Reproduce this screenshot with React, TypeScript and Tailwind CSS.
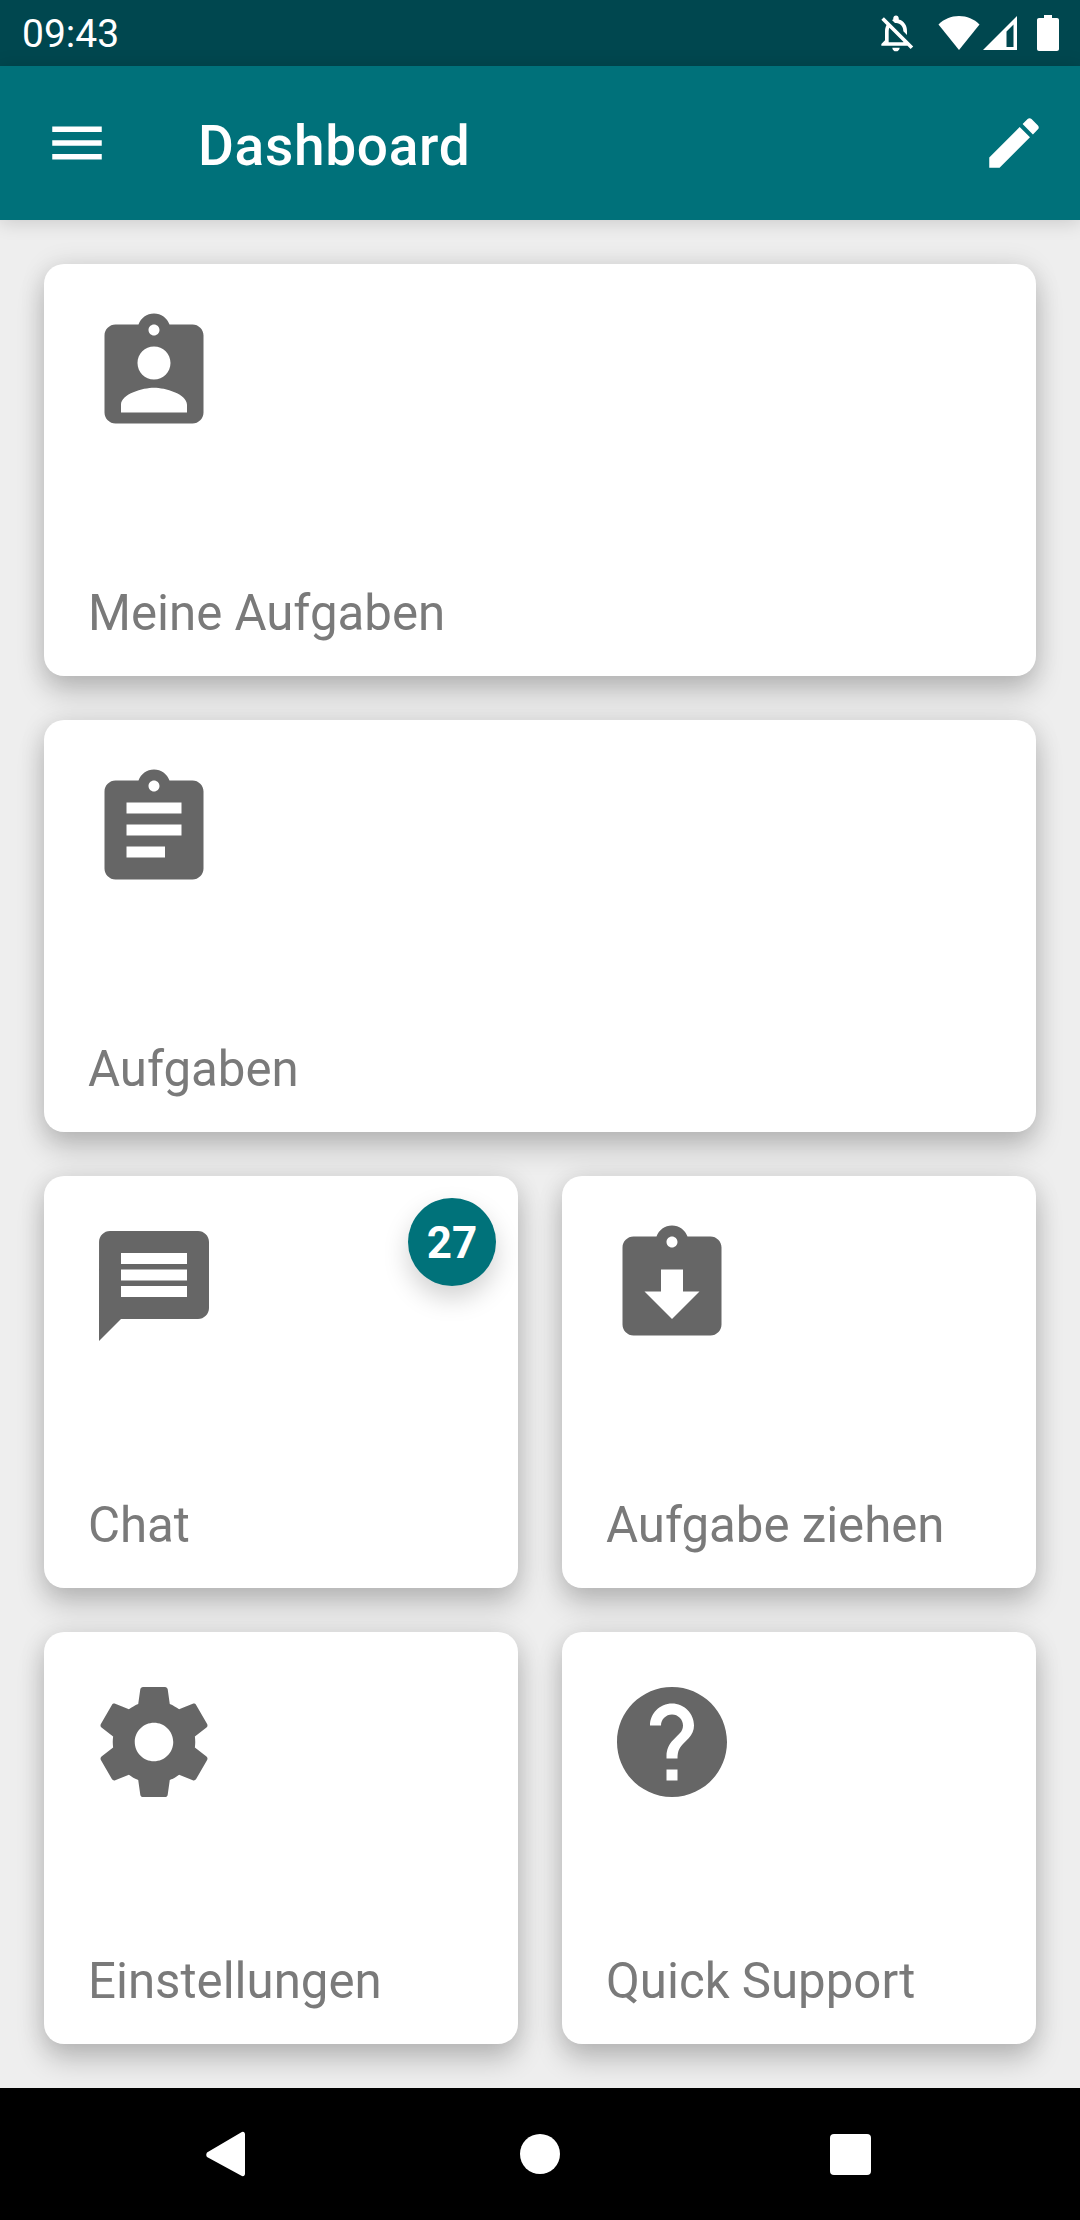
const clipboard =
  'M19 3h-4.18C14.4 1.84 13.3 1 12 1c-1.3 0-2.4.84-2.82 2H5c-1.1 0-2 .9-2 2v14c0 1.1.9 2 2 2h14c1.1 0 2-.9 2-2V5c0-1.1-.9-2-2-2zm-7 0c.55 0 1 .45 1 1s-.45 1-1 1-1-.45-1-1 .45-1 1-1z'

const icons = {
  person: clipboard + 'm0 4c1.66 0 3 1.34 3 3s-1.34 3-3 3-3-1.34-3-3 1.34-3 3-3zm6 12H6v-1.4c0-2 4-3.1 6-3.1s6 1.1 6 3.1V19z',
  list: clipboard + 'm2 14H7v-2h7v2zm3-4H7v-2h10v2zm0-4H7V7h10v2z',
  chat: 'M20 2H4c-1.1 0-1.99.9-1.99 2L2 22l4-4h14c1.1 0 2-.9 2-2V4c0-1.1-.9-2-2-2zm-2 12H6v-2h12v2zm0-3H6V9h12v2zm0-3H6V6h12v2z',
  pull: clipboard + 'm0 15l-5-5h3V9h4v4h3l-5 5z',
  settings:
    'M19.43 12.98c.04-.32.07-.64.07-.98s-.03-.66-.07-.98l2.11-1.65c.19-.15.24-.42.12-.64l-2-3.46c-.12-.22-.39-.3-.61-.22l-2.49 1c-.52-.4-1.08-.73-1.69-.98l-.38-2.65C14.46 2.18 14.25 2 14 2h-4c-.25 0-.46.18-.49.42l-.38 2.65c-.61.25-1.17.59-1.69.98l-2.49-1c-.23-.09-.49 0-.61.22l-2 3.46c-.13.22-.07.49.12.64l2.11 1.65c-.04.32-.07.65-.07.98s.03.66.07.98l-2.11 1.65c-.19.15-.24.42-.12.64l2 3.46c.12.22.39.3.61.22l2.49-1c.52.4 1.08.73 1.69.98l.38 2.65c.03.24.24.42.49.42h4c.25 0 .46-.18.49-.42l.38-2.65c.61-.25 1.17-.59 1.69-.98l2.49 1c.23.09.49 0 .61-.22l2-3.46c.12-.22.07-.49-.12-.64l-2.11-1.65zM12 15.5c-1.93 0-3.5-1.57-3.5-3.5s1.57-3.5 3.5-3.5 3.5 1.57 3.5 3.5-1.57 3.5-3.5 3.5z',
  help: 'M12 2C6.48 2 2 6.48 2 12s4.48 10 10 10 10-4.48 10-10S17.52 2 12 2zm1 17h-2v-2h2v2zm2.07-7.75l-.9.92C13.45 12.9 13 13.5 13 15h-2v-.5c0-1.1.45-2.1 1.17-2.83l1.24-1.26c.37-.36.59-.86.59-1.41 0-1.1-.9-2-2-2s-2 .9-2 2H8c0-2.21 1.79-4 4-4s4 1.79 4 4c0 .88-.36 1.68-.93 2.25z',
}

function Icon({ d, className }: { d: string; className: string }) {
  return (
    <svg viewBox="0 0 24 24" fill="currentColor" className={className}>
      <path d={d} />
    </svg>
  )
}

function Card({ icon, label, badge, className = '' }: { icon: string; label: string; badge?: string; className?: string }) {
  return (
    <div className={`relative flex h-[412px] flex-col rounded-[20px] bg-white pt-[44px] pl-[44px] pb-[36px] shadow-[0_16px_28px_rgba(0,0,0,0.2),0_0_26px_rgba(0,0,0,0.1)] ${className}`}>
      <Icon d={icon} className="h-[132px] w-[132px] text-[#666666]" />
      <span className="mt-auto text-[49.2px] leading-[54px] text-[#7a7a7a]">{label}</span>
      {badge && (
        <span className="absolute top-[22px] right-[22px] flex h-[88px] w-[88px] items-center justify-center rounded-full bg-[#00727A] pt-[2px] text-[44px] font-bold text-white shadow-[0_12px_26px_rgba(0,0,0,0.18)]">
          {badge}
        </span>
      )}
    </div>
  )
}

export default function App() {
  return (
    <div className="flex h-[2220px] w-[1080px] flex-col overflow-hidden bg-[#eeeeee] font-['Roboto',sans-serif]">
      <div className="flex h-[66px] shrink-0 items-center justify-between bg-[#00474F] pl-[22px] pr-[21px] text-white">
        <span className="pt-[2px] text-[39px] leading-[66px]">09:43</span>
        <div className="flex items-center">
          <Icon
            d="M12 22c1.1 0 2-.9 2-2h-4c0 1.1.9 2 2 2zm0-15.5c2.49 0 4 2.02 4 4.5v.1l2 2V11c0-3.07-1.63-5.64-4.5-6.32V4c0-.83-.67-1.5-1.5-1.5s-1.5.67-1.5 1.5v.68c-.24.06-.47.15-.69.23l1.64 1.64c.18-.02.36-.05.55-.05zM5.41 3.35L4 4.76l2.81 2.81C6.29 8.57 6 9.74 6 11v5l-2 2v1h14.24l1.74 1.74 1.41-1.41L5.41 3.35zM16 17H8v-6c0-.68.12-1.32.34-1.9L16 16.76V17z"
            className="h-[44px] w-[44px]"
          />
          <svg viewBox="0 0 42 36" fill="currentColor" className="ml-[20px] h-[36px] w-[42px]">
            <path d="M21 35L0.5 9.5C6 4 13 1 21 1s15 3 20.5 8.5z" />
          </svg>
          <svg viewBox="0 0 36 36" fill="currentColor" className="ml-[2px] h-[36px] w-[36px]">
            <path fillRule="evenodd" d="M35 1v34H1zM31.5 9.5L24.5 16.500v15.500h7z" />
          </svg>
          <svg viewBox="0 0 22 36" fill="currentColor" className="ml-[19px] h-[36px] w-[22px]">
            <path d="M7 0h8v3h5c1.100 0 2 .9 2 2v29c0 1.100-.9 2-2 2H2c-1.100 0-2-.9-2-2V5c0-1.100.9-2 2-2h5z" />
          </svg>
        </div>
      </div>

      <header className="relative z-10 flex h-[154px] shrink-0 items-center bg-[#00717A] pl-[44px] pr-[33px] text-white shadow-[0_2px_18px_rgba(0,0,0,0.16)]">
        <Icon d="M3 18h18v-2H3v2zm0-5h18v-2H3v2zm0-7v2h18V6H3z" className="h-[66px] w-[66px]" />
        <h1 className="ml-[88px] pt-[6px] text-[55px] font-medium leading-[66px] tracking-[0.69px]">Dashboard</h1>
        <Icon
          d="M3 17.25V21h3.750L17.810 9.940l-3.750-3.750L3 17.250zM20.710 7.040c.39-.39.39-1.020 0-1.410l-2.340-2.340c-.39-.39-1.020-.39-1.410 0l-1.830 1.830 3.750 3.750 1.830-1.830z"
          className="ml-auto h-[66px] w-[66px]"
        />
      </header>

      <main className="grid flex-1 grid-cols-2 content-start gap-[44px] overflow-hidden p-[44px]">
        <Card icon={icons.person} label="Meine Aufgaben" className="col-span-2" />
        <Card icon={icons.list} label="Aufgaben" className="col-span-2" />
        <Card icon={icons.chat} label="Chat" badge="27" />
        <Card icon={icons.pull} label="Aufgabe ziehen" />
        <Card icon={icons.settings} label="Einstellungen" />
        <Card icon={icons.help} label="Quick Support" />
      </main>

      <nav className="relative z-10 flex h-[132px] shrink-0 items-center bg-black pl-[206px]">
        <svg viewBox="0 0 40 46" fill="white" className="h-[46px] w-[40px]">
          <path d="M1 26c-1-1.500-1-3 0-4.500L35 1.500c2-1.500 4-.5 4 2v39c0 2.500-2 3.500-4 2z" />
        </svg>
        <span className="ml-[274px] h-[40px] w-[40px] rounded-full bg-white" />
        <span className="ml-[270px] h-[41px] w-[41px] rounded-[4px] bg-white" />
      </nav>
    </div>
  )
}
